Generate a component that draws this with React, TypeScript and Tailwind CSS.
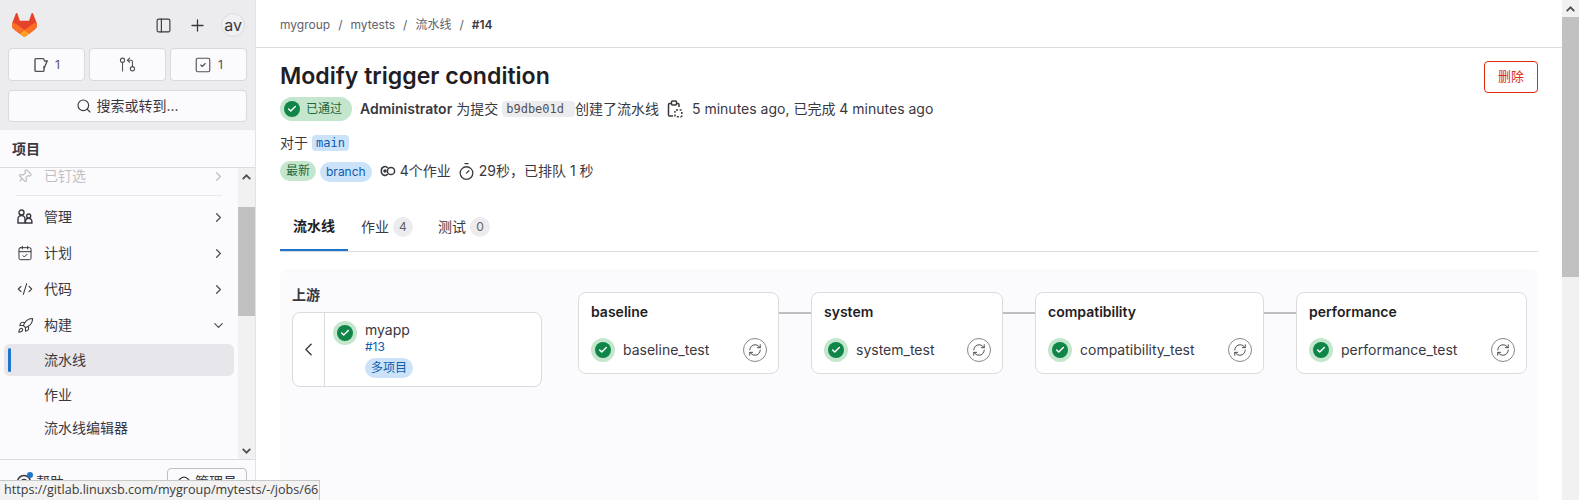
import {
  Search,
  Plus,
  PanelLeft,
  SquareCheck,
  GitPullRequestArrow,
  ChevronRight,
  ChevronDown,
  ChevronLeft,
  CalendarCheck,
  CodeXml,
  Rocket,
  Pin,
  RefreshCw,
  Timer,
  Check,
  Gauge,
} from "lucide-react";

const FONT = "font-['Inter','Noto_Sans_CJK_SC',sans-serif]";

function Logo() {
  return (
    <svg width="25" height="24" viewBox="0 0 25 24">
      <path d="m24.507 9.5-.034-.09L21.082.562a.896.896 0 0 0-1.694.091l-2.29 7.01H7.825L5.535.653a.898.898 0 0 0-1.694-.09L.451 9.411.416 9.5a6.297 6.297 0 0 0 2.09 7.278l.012.01.03.022 5.16 3.867 2.56 1.935 1.554 1.176a1.051 1.051 0 0 0 1.268 0l1.555-1.176 2.56-1.935 5.197-3.89.014-.01A6.297 6.297 0 0 0 24.507 9.5Z" fill="#E24329" />
      <path d="m24.507 9.5-.034-.09a11.44 11.44 0 0 0-4.56 2.051l-7.447 5.632 4.742 3.584 5.197-3.89.014-.01A6.297 6.297 0 0 0 24.507 9.5Z" fill="#FC6D26" />
      <path d="m7.707 20.677 2.56 1.935 1.555 1.176a1.051 1.051 0 0 0 1.268 0l1.555-1.176 2.56-1.935-4.743-3.584-4.755 3.584Z" fill="#FCA326" />
      <path d="M5.01 11.461a11.43 11.43 0 0 0-4.56-2.05L.416 9.5a6.297 6.297 0 0 0 2.09 7.278l.012.01.03.022 5.16 3.867 4.745-3.584-7.444-5.632Z" fill="#FC6D26" />
    </svg>
  );
}

function IssueIcon() {
  return (
    <svg width="16" height="16" viewBox="0 0 16 16" fill="none" stroke="#535158" strokeWidth="1.4">
      <path d="M11 3.5V2.6c0-.6-.4-1-1-1H3c-.6 0-1 .4-1 1v10.8c0 .6.4 1 1 1h7c.6 0 1-.4 1-1V9" />
      <path d="M11 4h3.2L11 11.5" />
    </svg>
  );
}

function GroupIcon() {
  return (
    <svg width="16" height="16" viewBox="0 0 16 16" fill="none" stroke="#3a383f" strokeWidth="1.4">
      <circle cx="4.5" cy="3.5" r="2.5" />
      <path d="M1 14v-4a3.5 3.5 0 0 1 7 0v4z" />
      <circle cx="11.7" cy="7" r="2" />
      <path d="M8.5 14v-1.5a3.2 3.2 0 0 1 6.4 0V14z" />
    </svg>
  );
}

function JobsIcon() {
  return (
    <svg width="16" height="16" viewBox="0 0 16 16" fill="none" stroke="#3a383f" strokeWidth="1.5">
      <circle cx="11" cy="8" r="3.6" />
      <path d="M7.8 4.9A3.7 3.7 0 0 0 1.4 8a3.7 3.7 0 0 0 6.4 3.1" />
      <circle cx="5" cy="8" r="1" fill="#3a383f" />
    </svg>
  );
}

function CopyIcon() {
  return (
    <svg width="16" height="18" viewBox="0 0 16 18" fill="none" stroke="#3a383f" strokeWidth="1.5">
      <path d="M6 16H2.5c-.6 0-1-.4-1-1V4.5c0-.6.4-1 1-1H4" />
      <path d="M10 3.5h1c.6 0 1 .4 1 1V7" />
      <rect x="4.5" y="1" width="5" height="4" rx="1" />
      <rect x="8" y="10" width="6.8" height="6.8" rx="1" strokeDasharray="2 1.6" />
    </svg>
  );
}

function StatusIcon({ ring = true }: { ring?: boolean }) {
  return (
    <span className={`flex shrink-0 items-center justify-center rounded-full ${ring ? "h-6 w-6 bg-[#c3e6cd]" : "h-4 w-4"}`}>
      <span className="flex h-4 w-4 items-center justify-center rounded-full bg-[#108548]">
        <Check size={10} strokeWidth={3.5} color="#fff" />
      </span>
    </span>
  );
}

function TopButton({ icon, count }: { icon: React.ReactNode; count?: string }) {
  return (
    <div className="flex h-[33px] w-[77px] items-center justify-center gap-[6px] rounded border border-[#d9d8dc] bg-[#fbfafd] text-xs text-[#535158]">
      {icon}
      {count && <span>{count}</span>}
    </div>
  );
}

function NavRow({ icon, label, chevron = "right" }: { icon: React.ReactNode; label: string; chevron?: "right" | "down" }) {
  return (
    <div className="mx-1 flex h-9 w-[230px] items-center pl-[13px] pr-2 text-sm text-[#3a383f]">
      <span className="flex w-[27px] shrink-0 items-center">{icon}</span>
      <span className="flex-1">{label}</span>
      {chevron === "right" ? <ChevronRight size={15} color="#535158" /> : <ChevronDown size={15} color="#535158" />}
    </div>
  );
}

function SubRow({ label, active = false }: { label: string; active?: boolean }) {
  return (
    <div className={`relative mx-1 flex h-8 w-[230px] items-center rounded-md pl-10 text-sm text-[#3a383f] ${active ? "bg-[#e7e6ea]" : ""}`}>
      {active && <span className="absolute left-1 top-1 h-6 w-[3px] rounded bg-[#1f75cb]" />}
      {label}
    </div>
  );
}

function Arrow({ down = false }: { down?: boolean }) {
  return (
    <div className="flex h-[17px] items-center justify-center">
      <svg width="9" height="6" viewBox="0 0 9 6" fill="none" stroke="#505050" strokeWidth="1.8">
        <path d={down ? "M.7.9l3.8 3.8L8.3.9" : "M.7 5.1l3.8-3.8 3.8 3.8"} />
      </svg>
    </div>
  );
}

function Sidebar() {
  return (
    <aside className="flex h-[500px] w-[256px] shrink-0 flex-col overflow-hidden border-r border-[#e3e2e6] bg-[#fbfafd]">
      <div className="h-[130px] shrink-0 bg-[#ececef] px-2">
        <div className="flex h-12 items-center">
          <span className="ml-1 mt-0.5">
            <Logo />
          </span>
          <span className="ml-[118px] mt-0.5">
            <PanelLeft size={17} strokeWidth={1.6} color="#3a383f" />
          </span>
          <span className="ml-4 mt-0.5">
            <Plus size={19} strokeWidth={1.6} color="#3a383f" />
          </span>
          <span className="ml-[14px] mt-0.5 flex h-6 w-6 items-center justify-center rounded-full border border-[#dcdbdf] bg-[#f0eff2] text-base leading-none text-[#3a383f]">
            av
          </span>
        </div>
        <div className="flex gap-1">
          <TopButton icon={<IssueIcon />} count="1" />
          <TopButton icon={<GitPullRequestArrow size={17} strokeWidth={1.5} color="#535158" />} />
          <TopButton icon={<SquareCheck size={18} strokeWidth={1.5} color="#535158" />} count="1" />
        </div>
        <div className="mt-[9px] flex h-8 w-[239px] items-center justify-center gap-1 rounded border border-[#d9d8dc] bg-[#fbfafd] text-sm text-[#3a383f]">
          <Search size={16} strokeWidth={1.7} color="#3a383f" />
          <span>搜索或转到...</span>
        </div>
      </div>
      <div className="flex h-[38px] shrink-0 items-center border-b border-[#dcdcde] px-3 text-sm font-semibold text-[#3a383f]">项目</div>
      <div className="flex min-h-0 flex-1 border-b border-[#dcdcde]">
        <div className="w-[238px] overflow-hidden">
          <div className="flex h-[16px] w-[234px] items-center pl-[17px] pr-2 text-sm text-[#3a383f] opacity-30">
            <span className="w-[27px]">
              <Pin size={15} className="rotate-45" />
            </span>
            <span className="flex-1">已钉选</span>
            <ChevronRight size={15} />
          </div>
          <div className="mx-4 mb-[3px] mt-[11px] h-px w-[206px] bg-[#e8e7eb]" />
          <NavRow icon={<GroupIcon />} label="管理" />
          <NavRow icon={<CalendarCheck size={16} strokeWidth={1.5} />} label="计划" />
          <NavRow icon={<CodeXml size={16} strokeWidth={1.6} />} label="代码" />
          <NavRow icon={<Rocket size={17} strokeWidth={1.5} />} label="构建" chevron="down" />
          <div className="h-px" />
          <SubRow label="流水线" active />
          <div className="h-[3px]" />
          <SubRow label="作业" />
          <div className="h-px" />
          <SubRow label="流水线编辑器" />
        </div>
        <div className="flex w-[17px] flex-col bg-[#f1f1f1]">
          <Arrow />
          <div className="h-[22px]" />
          <div className="h-[109px] bg-[#c1c1c1]" />
          <div className="flex-1" />
          <Arrow down />
        </div>
      </div>
      <div className="flex h-[40px] shrink-0 items-start justify-between px-2 pt-2 text-sm text-[#3a383f]">
        <span className="relative ml-2 mt-1 flex items-center gap-1">
          <svg width="16" height="16" viewBox="0 0 16 16" fill="none" stroke="#3a383f" strokeWidth="1.5">
            <circle cx="8" cy="8" r="6.5" />
            <circle cx="8" cy="8" r="2.5" />
          </svg>
          <span className="absolute left-[11px] top-0 h-[6px] w-[6px] rounded-full bg-[#1f75cb]" />
          帮助
        </span>
        <span className="flex h-7 w-[80px] items-center justify-center gap-1 rounded border border-[#bfbfc3] text-sm">
          <Gauge size={14} />
          管理员
        </span>
      </div>
    </aside>
  );
}

function Badge({ children, tone }: { children: React.ReactNode; tone: "green" | "blue" }) {
  return (
    <span className={`inline-flex h-5 items-center rounded-full px-[6px] text-xs ${tone === "green" ? "bg-[#c3e6cd] text-[#24663b]" : "bg-[#cbe2f9] text-[#0b5cad]"}`}>
      {children}
    </span>
  );
}

function JobCard({ stage, job, width, gap }: { stage: string; job: string; width: string; gap?: boolean }) {
  return (
    <>
      {gap && <div className="mt-[20px] h-[2px] w-8 shrink-0 bg-[#bfbfc3]" />}
      <div className={`h-[82px] shrink-0 rounded-lg border border-[#dcdcde] bg-white pl-3 pr-[11px] ${width}`}>
        <div className="flex h-[38px] items-center text-sm font-semibold text-[#1f1e24]">{stage}</div>
        <div className="mt-[7px] flex items-center">
          <StatusIcon />
          <span className="ml-2 flex-1 text-sm text-[#3a383f]">{job}</span>
          <span className="flex h-6 w-6 items-center justify-center rounded-full border border-[#89888d] bg-white">
            <RefreshCw size={14} strokeWidth={1.5} color="#3a383f" />
          </span>
        </div>
      </div>
    </>
  );
}

function Main() {
  return (
    <main className="flex h-[500px] min-w-0 flex-1 flex-col overflow-hidden bg-white">
      <div className="flex h-12 shrink-0 items-center gap-2 border-b border-[#dcdcde] pl-[24px] pt-0.5 text-xs text-[#626168]">
        <span>mygroup</span>
        <span>/</span>
        <span>mytests</span>
        <span>/</span>
        <span>流水线</span>
        <span>/</span>
        <span className="font-semibold text-[#3a383f]">#14</span>
      </div>
      <div className="flex flex-col pl-[24px] pr-[24px]">
        <div className="flex items-start justify-between pt-3">
          <h1 className="text-[23.1px] font-semibold leading-8 text-[#1f1e24]">Modify trigger condition</h1>
          <span className="mt-px flex h-8 w-[54px] items-center justify-center rounded border border-[#dd2b0e] text-[13px] text-[#dd2b0e]">删除</span>
        </div>
        <div className="mt-1 flex h-6 items-center text-sm text-[#3a383f]">
          <span className="flex h-6 w-[72px] items-center gap-[6px] rounded-full bg-[#c3e6cd] pl-1 text-xs text-[#24663b]">
            <StatusIcon ring={false} />
            已通过
          </span>
          <span className="ml-2 font-semibold">Administrator</span>
          <span className="ml-1">为提交</span>
          <code className="ml-1 rounded bg-[#ececef] px-1 pr-[11px] font-['DejaVu_Sans_Mono',monospace] text-xs leading-4 text-[#535158]">b9dbe01d</code>
          <span>创建了流水线</span>
          <span className="ml-2">
            <CopyIcon />
          </span>
          <span className="ml-[9px]">5 minutes ago, 已完成 4 minutes ago</span>
        </div>
        <div className="mt-3 flex h-5 items-center text-sm text-[#3a383f]">
          对于
          <code className="ml-1 rounded bg-[#cbe2f9] px-1 font-['DejaVu_Sans_Mono',monospace] text-xs leading-4 text-[#0b5cad]">main</code>
        </div>
        <div className="mt-2 flex h-5 items-center text-sm text-[#3a383f]">
          <Badge tone="green">最新</Badge>
          <span className="ml-1">
            <Badge tone="blue">branch</Badge>
          </span>
          <span className="ml-2">
            <JobsIcon />
          </span>
          <span className="ml-1">4个作业</span>
          <span className="ml-[6px]">
            <Timer size={19} strokeWidth={1.6} />
          </span>
          <span className="ml-[3px]">29秒，已排队 1 秒</span>
        </div>
        <div className="mt-5 flex h-[51px] items-stretch border-b border-[#dcdcde] pt-px text-sm text-[#3a383f]">
          <div className="flex w-[68px] items-center justify-center border-b-2 border-[#1f75cb] font-semibold text-[#1f1e24]">流水线</div>
          <div className="ml-[13px] flex items-center gap-1">
            作业
            <span className="flex h-5 w-5 items-center justify-center rounded-full bg-[#ececef] text-xs text-[#626168]">4</span>
          </div>
          <div className="ml-[25px] flex items-center gap-1">
            测试
            <span className="flex h-5 w-5 items-center justify-center rounded-full bg-[#ececef] text-xs text-[#626168]">0</span>
          </div>
        </div>
        <div className="mt-[17px] flex h-[400px] rounded-t-lg bg-[#fbfafd] pl-3 pr-[11px] pt-4">
          <div className="w-[250px] shrink-0">
            <div className="flex h-5 items-center text-sm font-semibold text-[#3a383f]">上游</div>
            <div className="mt-[7px] flex h-[75px] rounded-lg border border-[#dcdcde] bg-white">
              <div className="flex w-8 shrink-0 items-center justify-center border-r border-[#dcdcde]">
                <ChevronLeft size={21} strokeWidth={1.6} color="#3a383f" />
              </div>
              <div className="ml-2 mt-2">
                <StatusIcon />
              </div>
              <div className="ml-2 mt-2 flex flex-col items-start">
                <span className="text-sm leading-[18px] text-[#3a383f]">myapp</span>
                <span className="text-xs leading-[15px] text-[#0b5cad]">#13</span>
                <span className="mt-1 flex">
                  <Badge tone="blue">多项目</Badge>
                </span>
              </div>
            </div>
          </div>
          <div className="ml-[36px] mt-[7px] flex items-start">
            <JobCard stage="baseline" job="baseline_test" width="w-[201px]" />
            <JobCard stage="system" job="system_test" width="w-[192px]" gap />
            <JobCard stage="compatibility" job="compatibility_test" width="w-[229px]" gap />
            <JobCard stage="performance" job="performance_test" width="w-[231px]" gap />
          </div>
        </div>
      </div>
    </main>
  );
}

export default function App() {
  return (
    <div className={`relative flex h-[500px] w-[1579px] overflow-hidden bg-white ${FONT}`}>
      <Sidebar />
      <Main />
      <div className="flex h-[500px] w-[17px] shrink-0 flex-col bg-[#f1f1f1]">
        <Arrow />
        <div className="h-[260px] bg-[#c1c1c1]" />
      </div>
      <div className="absolute bottom-0 left-0 flex h-5 w-[320px] items-center border-r border-t border-[#c8c8c8] bg-[#f2f2f2] pl-1 font-['Open_Sans',sans-serif] text-[12.6px] text-[#3a3a3a]">
        https://gitlab.linuxsb.com/mygroup/mytests/-/jobs/66
      </div>
    </div>
  );
}
